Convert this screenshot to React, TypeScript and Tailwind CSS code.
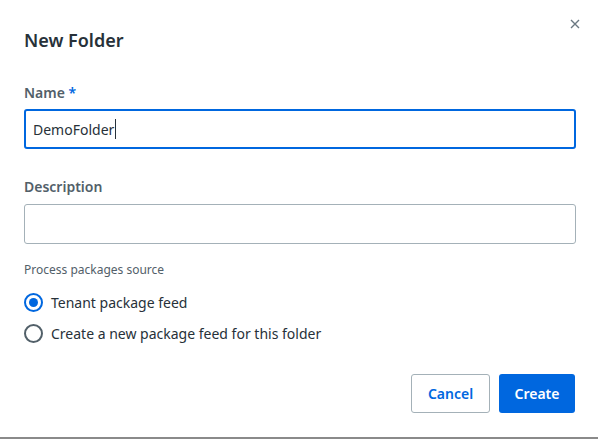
import { useState } from 'react';

function Radio({ checked, label, onClick }: { checked: boolean; label: string; onClick: () => void }) {
  return (
    <label onClick={onClick} className="flex items-center h-[31px] cursor-pointer">
      <span
        className={`w-[19px] h-[19px] rounded-full border-2 flex items-center justify-center ml-[24px] ${
          checked ? 'border-[#0067df]' : 'border-[#526069]'
        }`}
      >
        {checked && <span className="w-[9px] h-[9px] rounded-full bg-[#0067df]" />}
      </span>
      <span className="ml-[8px] text-[14px] text-[#273139]">{label}</span>
    </label>
  );
}

export default function App() {
  const [source, setSource] = useState<'tenant' | 'new'>('tenant');

  return (
    <div
      className="relative w-[598px] h-[439px] bg-white border-b-2 border-[#8a8a8a] overflow-hidden"
      style={{ fontFamily: '"Noto Sans", "Open Sans", sans-serif' }}
    >
      <button className="absolute top-[18px] right-[17px] w-[12px] h-[12px] flex items-center justify-center text-[#6b7882]">
        <svg width="10" height="10" viewBox="0 0 10 10" fill="none" stroke="currentColor" strokeWidth="1.4">
          <path d="M1 1l8 8M9 1l-8 8" />
        </svg>
      </button>

      <div className="pt-[26px] pl-[24px] pr-[22px]">
        <h2 className="text-[18px] leading-[28px] font-semibold text-[#273139]">New Folder</h2>

        <div className="mt-[29px] text-[14px] leading-[20px] font-semibold text-[#526069]">
          Name <span className="text-[#0067df]">*</span>
        </div>
        <div className="mt-[6px] h-[40px] border-2 border-[#0067df] rounded-[3px] flex items-center pl-[7px]">
          <span className="text-[14px] text-[#273139]">DemoFolder</span>
          <span className="w-px h-[20px] bg-[#273139] ml-px" />
        </div>

        <div className="mt-[28px] text-[14px] leading-[20px] font-semibold text-[#526069]">Description</div>
        <div className="mt-[7px] h-[40px] border border-[#a4b1b8] rounded-[3px]" />

        <div className="mt-[18px] text-[12px] leading-[16px] text-[#526069]">Process packages source</div>
      </div>

      <div className="mt-[9px]">
        <Radio checked={source === 'tenant'} label="Tenant package feed" onClick={() => setSource('tenant')} />
        <Radio
          checked={source === 'new'}
          label="Create a new package feed for this folder"
          onClick={() => setSource('new')}
        />
      </div>

      <div className="mt-[25px] pr-[23px] flex justify-end gap-[9px]">
        <button className="w-[79px] h-[39px] border border-[#a4b1b8] rounded-[3px] text-[14px] font-semibold text-[#0067df] bg-white">
          Cancel
        </button>
        <button className="w-[76px] h-[39px] rounded-[3px] text-[14px] font-semibold text-white bg-[#0067df]">
          Create
        </button>
      </div>
    </div>
  );
}
